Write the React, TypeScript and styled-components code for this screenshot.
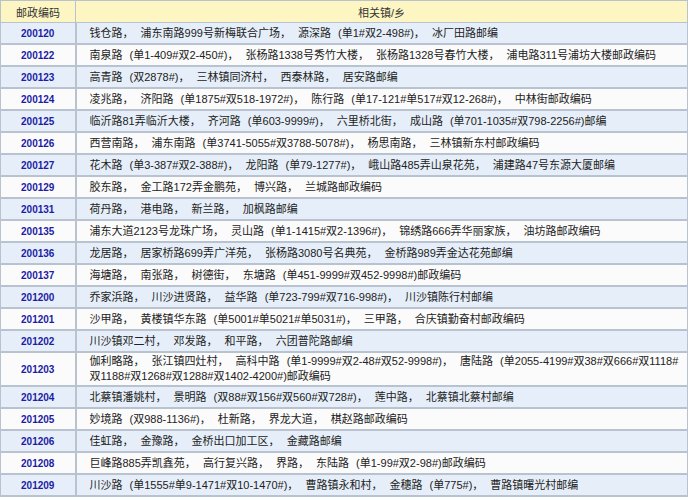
import styled, { createGlobalStyle } from "styled-components";

const Global = createGlobalStyle`
  body {
    margin: 0;
    background: #ffffff;
    font-family: "Liberation Sans", "Noto Sans CJK SC", sans-serif;
  }
`;

const Table = styled.table`
  width: 688px;
  border-collapse: collapse;
  table-layout: fixed;
  font-size: 11px;
`;

const HeadCell = styled.th`
  background: #fdf6c3;
  color: #333;
  font-weight: normal;
  height: 21px;
  padding: 0;
  border: 1px solid #b9c3cf;
  font-size: 11px;
`;

const Row = styled.tr<{ $alt: boolean }>`
  background: ${(p) => (p.$alt ? "#e6eff9" : "#fbfbfb")};
`;

const CodeCell = styled.td`
  width: 74px;
  text-align: center;
  color: #1c1ca6;
  font-weight: bold;
  font-size: 10px;
  border: 1px solid #b9c3cf;
  border-width: 1px 2px 2px 1px;
  height: 20px;
  padding: 0;
`;

const TextCell = styled.td`
  color: #222;
  border: 1px solid #b9c3cf;
  border-width: 1px 1px 2px 1px;
  padding: 1px 4px 1px 13px;
  line-height: 15px;
  font-size: 11px;
  word-spacing: 4px;
`;

const rows: [string, string][] = [
  ["200120", "钱仓路， 浦东南路999号新梅联合广场， 源深路 (单1#双2-498#)， 冰厂田路邮编"],
  ["200122", "南泉路 (单1-409#双2-450#)， 张杨路1338号秀竹大楼， 张杨路1328号春竹大楼， 浦电路311号浦坊大楼邮政编码"],
  ["200123", "高青路 (双2878#)， 三林镇同济村， 西泰林路， 居安路邮编"],
  ["200124", "凌兆路， 济阳路 (单1875#双518-1972#)， 陈行路 (单17-121#单517#双12-268#)， 中林街邮政编码"],
  ["200125", "临沂路81弄临沂大楼， 齐河路 (单603-9999#)， 六里桥北街， 成山路 (单701-1035#双798-2256#)邮编"],
  ["200126", "西营南路， 浦东南路 (单3741-5055#双3788-5078#)， 杨思南路， 三林镇新东村邮政编码"],
  ["200127", "花木路 (单3-387#双2-388#)， 龙阳路 (单79-1277#)， 峨山路485弄山泉花苑， 浦建路47号东源大厦邮编"],
  ["200129", "胶东路， 金工路172弄金鹏苑， 博兴路， 兰城路邮政编码"],
  ["200131", "荷丹路， 港电路， 新兰路， 加枫路邮编"],
  ["200135", "浦东大道2123号龙珠广场， 灵山路 (单1-1415#双2-1396#)， 锦绣路666弄华丽家族， 油坊路邮政编码"],
  ["200136", "龙居路， 居家桥路699弄广洋苑， 张杨路3080号名典苑， 金桥路989弄金达花苑邮编"],
  ["200137", "海塘路， 南张路， 树德街， 东塘路 (单451-9999#双452-9998#)邮政编码"],
  ["201200", "乔家浜路， 川沙进贤路， 益华路 (单723-799#双716-998#)， 川沙镇陈行村邮编"],
  ["201201", "沙甲路， 黄楼镇华东路 (单5001#单5021#单5031#)， 三甲路， 合庆镇勤奋村邮政编码"],
  ["201202", "川沙镇邓二村， 邓发路， 和平路， 六团普陀路邮编"],
  ["201203", "伽利略路， 张江镇四灶村， 高科中路 (单1-9999#双2-48#双52-9998#)， 唐陆路 (单2055-4199#双38#双666#双1118#双1188#双1268#双1288#双1402-4200#)邮政编码"],
  ["201204", "北蔡镇潘姚村， 景明路 (双88#双156#双560#双728#)， 莲中路， 北蔡镇北蔡村邮编"],
  ["201205", "妙境路 (双988-1136#)， 杜新路， 界龙大道， 棋赵路邮政编码"],
  ["201206", "佳虹路， 金豫路， 金桥出口加工区， 金藏路邮编"],
  ["201208", "巨峰路885弄凯鑫苑， 高行复兴路， 界路， 东陆路 (单1-99#双2-98#)邮政编码"],
  ["201209", "川沙路 (单1555#单9-1471#双10-1470#)， 曹路镇永和村， 金穗路 (单775#)， 曹路镇曙光村邮编"],
];

export default function App() {
  return (
    <>
      <Global />
      <Table>
        <thead>
          <tr>
            <HeadCell style={{ width: 74 }}>邮政编码</HeadCell>
            <HeadCell>相关镇/乡</HeadCell>
          </tr>
        </thead>
        <tbody>
          {rows.map(([code, text], i) => (
            <Row key={code} $alt={i % 2 === 0}>
              <CodeCell>{code}</CodeCell>
              <TextCell>{text}</TextCell>
            </Row>
          ))}
        </tbody>
      </Table>
    </>
  );
}
